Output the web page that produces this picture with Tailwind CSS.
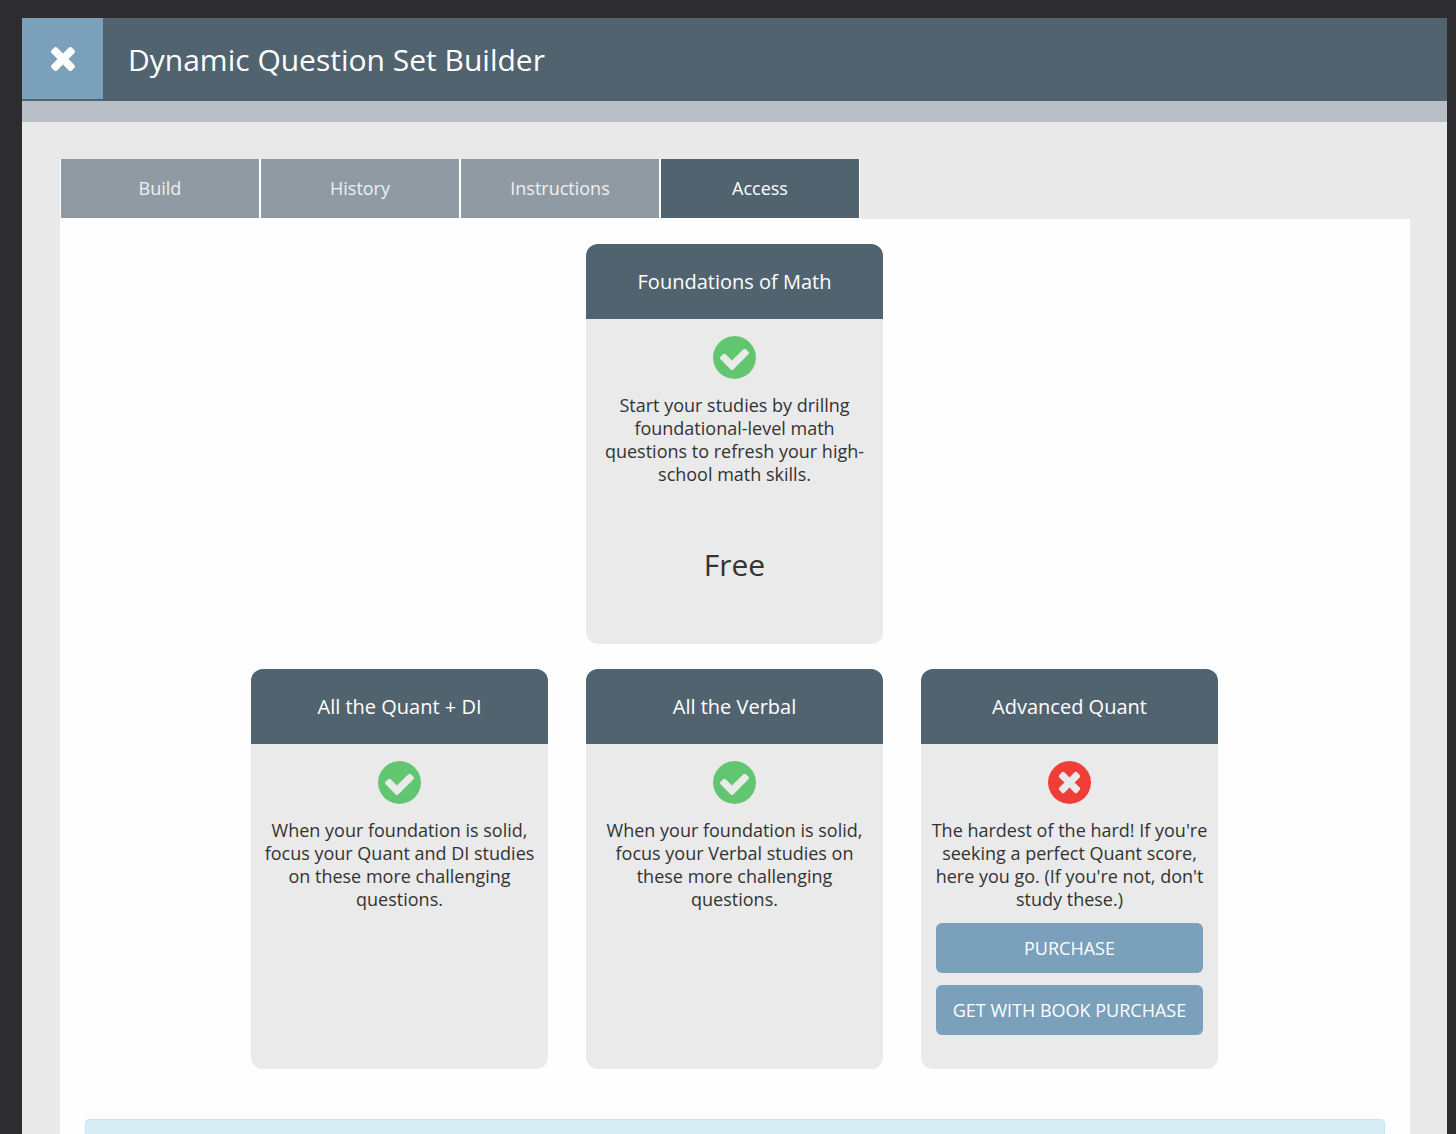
<!DOCTYPE html>
<html lang="en">
<head>
  <meta charset="UTF-8" />
  <meta name="viewport" content="width=device-width, initial-scale=1.0"/>
  <title>Dynamic Question Set Builder</title>
  <script src="https://cdn.jsdelivr.net/npm/@tailwindcss/browser@4"></script>
</head>
<body class="h-screen overflow-hidden bg-[#2d2d2f] pt-[18px] pl-[22px] pr-[9px] font-['Open_Sans',sans-serif] text-[#333]">
  <!-- Icons -->
  <svg class="hidden">
    <symbol id="check-circle" viewBox="128 128 1536 1536">
      <path d="M1412 734q0-28-18-46l-91-90q-19-19-45-19t-45 19l-408 407-226-226q-19-19-45-19t-45 19l-91 90q-18 18-18 46 0 27 18 45l362 362q19 19 45 19 27 0 46-19l543-543q18-18 18-45zm252 162q0 209-103 385.500t-279.500 279.500-385.500 103-385.500-103-279.500-279.500-103-385.500 103-385.500 279.500-279.500 385.500-103 385.500 103 279.500 279.500 103 385.500z" />
    </symbol>
    <symbol id="times-circle" viewBox="128 128 1536 1536">
      <path d="M1277 1122q0-26-19-45l-181-181 181-181q19-19 19-45 0-27-19-46l-90-90q-19-19-46-19-26 0-45 19l-181 181-181-181q-19-19-45-19-27 0-46 19l-90 90q-19 19-19 46 0 26 19 45l181 181-181 181q-19 19-19 45 0 27 19 46l90 90q19 19 46 19 26 0 45-19l181-181 181 181q19 19 45 19 27 0 46-19l90-90q19-19 19-46zm387-226q0 209-103 385.500t-279.500 279.500-385.500 103-385.500-103-279.500-279.500-103-385.500 103-385.500 279.500-279.500 385.500-103 385.500 103 279.500 279.500 103 385.500z" />
    </symbol>
  </svg>

  <div class="h-full bg-[#e9e9e9] overflow-hidden">
    <!-- Header -->
    <header class="flex bg-[#526370] h-[83px] text-white">
      <button aria-label="Close" class="w-[81px] h-[81px] bg-[#7aa0bb] flex items-center justify-center">
        <svg class="w-6 h-6" fill="currentColor" viewBox="302 366 1188 1188">
          <path d="M1490 1322q0 40-28 68l-136 136q-28 28-68 28t-68-28l-294-294-294 294q-28 28-68 28t-68-28l-136-136q-28-28-28-68t28-68l294-294-294-294q-28-28-28-68t28-68l136-136q28-28 68-28t68 28l294 294 294-294q28-28 68-28t68 28l136 136q28 28 28 68t-28 68l-294 294 294 294q28 28 28 68z" />
        </svg>
      </button>
      <h1 class="pl-[25px] text-[30px] leading-[84px]">Dynamic Question Set Builder</h1>
    </header>
    <div class="h-[21px] bg-[#b8bfc6]"></div>

    <main class="pt-[37px] pl-[38px] pr-[37px]">
      <!-- Tabs -->
      <nav class="flex text-lg text-white">
        <button class="w-[200px] h-[60px] pb-px border-x border-b border-white bg-[#909aa2] text-white/85">Build</button>
        <button class="w-[200px] h-[60px] pb-px border-x border-b border-white bg-[#909aa2] text-white/85">History</button>
        <button class="w-[200px] h-[60px] pb-px border-x border-b border-white bg-[#909aa2] text-white/85">Instructions</button>
        <button class="w-[200px] h-[60px] pb-px border-x border-b border-white bg-[#526370]">Access</button>
      </nav>

      <!-- Access panel -->
      <div class="bg-[#fefefe] px-[25px] pt-[25px] pb-10">
        <div class="flex flex-col items-center gap-[25px] pr-px text-center">
          <section class="w-[297px] h-[400px] rounded-xl overflow-hidden bg-[#eaeaea]">
            <h2 class="bg-[#526370] text-white text-xl leading-[75px]">Foundations of Math</h2>
            <div class="px-2 pt-[17px]">
              <svg class="w-[43px] h-[43px] mx-auto" fill="#62c670"><use href="#check-circle" /></svg>
              <p class="mt-[15px] text-lg leading-[23px]">Start your studies by drillng foundational-level math questions to refresh your high-school math skills.</p>
              <p class="mt-[58px] text-[30px] leading-[42px]">Free</p>
            </div>
          </section>

          <div class="flex gap-[38px]">
            <section class="w-[297px] h-[400px] rounded-xl overflow-hidden bg-[#eaeaea]">
              <h2 class="bg-[#526370] text-white text-xl leading-[75px]">All the Quant + DI</h2>
              <div class="px-2 pt-[17px]">
                <svg class="w-[43px] h-[43px] mx-auto" fill="#62c670"><use href="#check-circle" /></svg>
                <p class="mt-[15px] text-lg leading-[23px]">When your foundation is solid, focus your Quant and DI studies on these more challenging questions.</p>
              </div>
            </section>
            <section class="w-[297px] h-[400px] rounded-xl overflow-hidden bg-[#eaeaea]">
              <h2 class="bg-[#526370] text-white text-xl leading-[75px]">All the Verbal</h2>
              <div class="px-2 pt-[17px]">
                <svg class="w-[43px] h-[43px] mx-auto" fill="#62c670"><use href="#check-circle" /></svg>
                <p class="mt-[15px] text-lg leading-[23px]">When your foundation is solid, focus your Verbal studies on these more challenging questions.</p>
              </div>
            </section>
            <section class="w-[297px] h-[400px] rounded-xl overflow-hidden bg-[#eaeaea]">
              <h2 class="bg-[#526370] text-white text-xl leading-[75px]">Advanced Quant</h2>
              <div class="px-2 pt-[17px]">
                <svg class="w-[43px] h-[43px] mx-auto" fill="#ef3d37"><use href="#times-circle" /></svg>
                <p class="mt-[15px] text-lg leading-[23px]">The hardest of the hard! If you're seeking a perfect Quant score, here you go. (If you're not, don't study these.)</p>
                <div class="mt-3 px-[7px] flex flex-col gap-3 text-lg text-white">
                  <button class="h-[50px] rounded-md bg-[#7aa0bb]">PURCHASE</button>
                  <button class="h-[50px] rounded-md bg-[#7aa0bb]">GET WITH BOOK PURCHASE</button>
                </div>
              </div>
            </section>
          </div>
        </div>

        <!-- Info box -->
        <div class="mt-[50px] h-24 rounded border border-[#bce8f1] bg-[#d9edf7]"></div>
      </div>
    </main>
  </div>
</body>
</html>
